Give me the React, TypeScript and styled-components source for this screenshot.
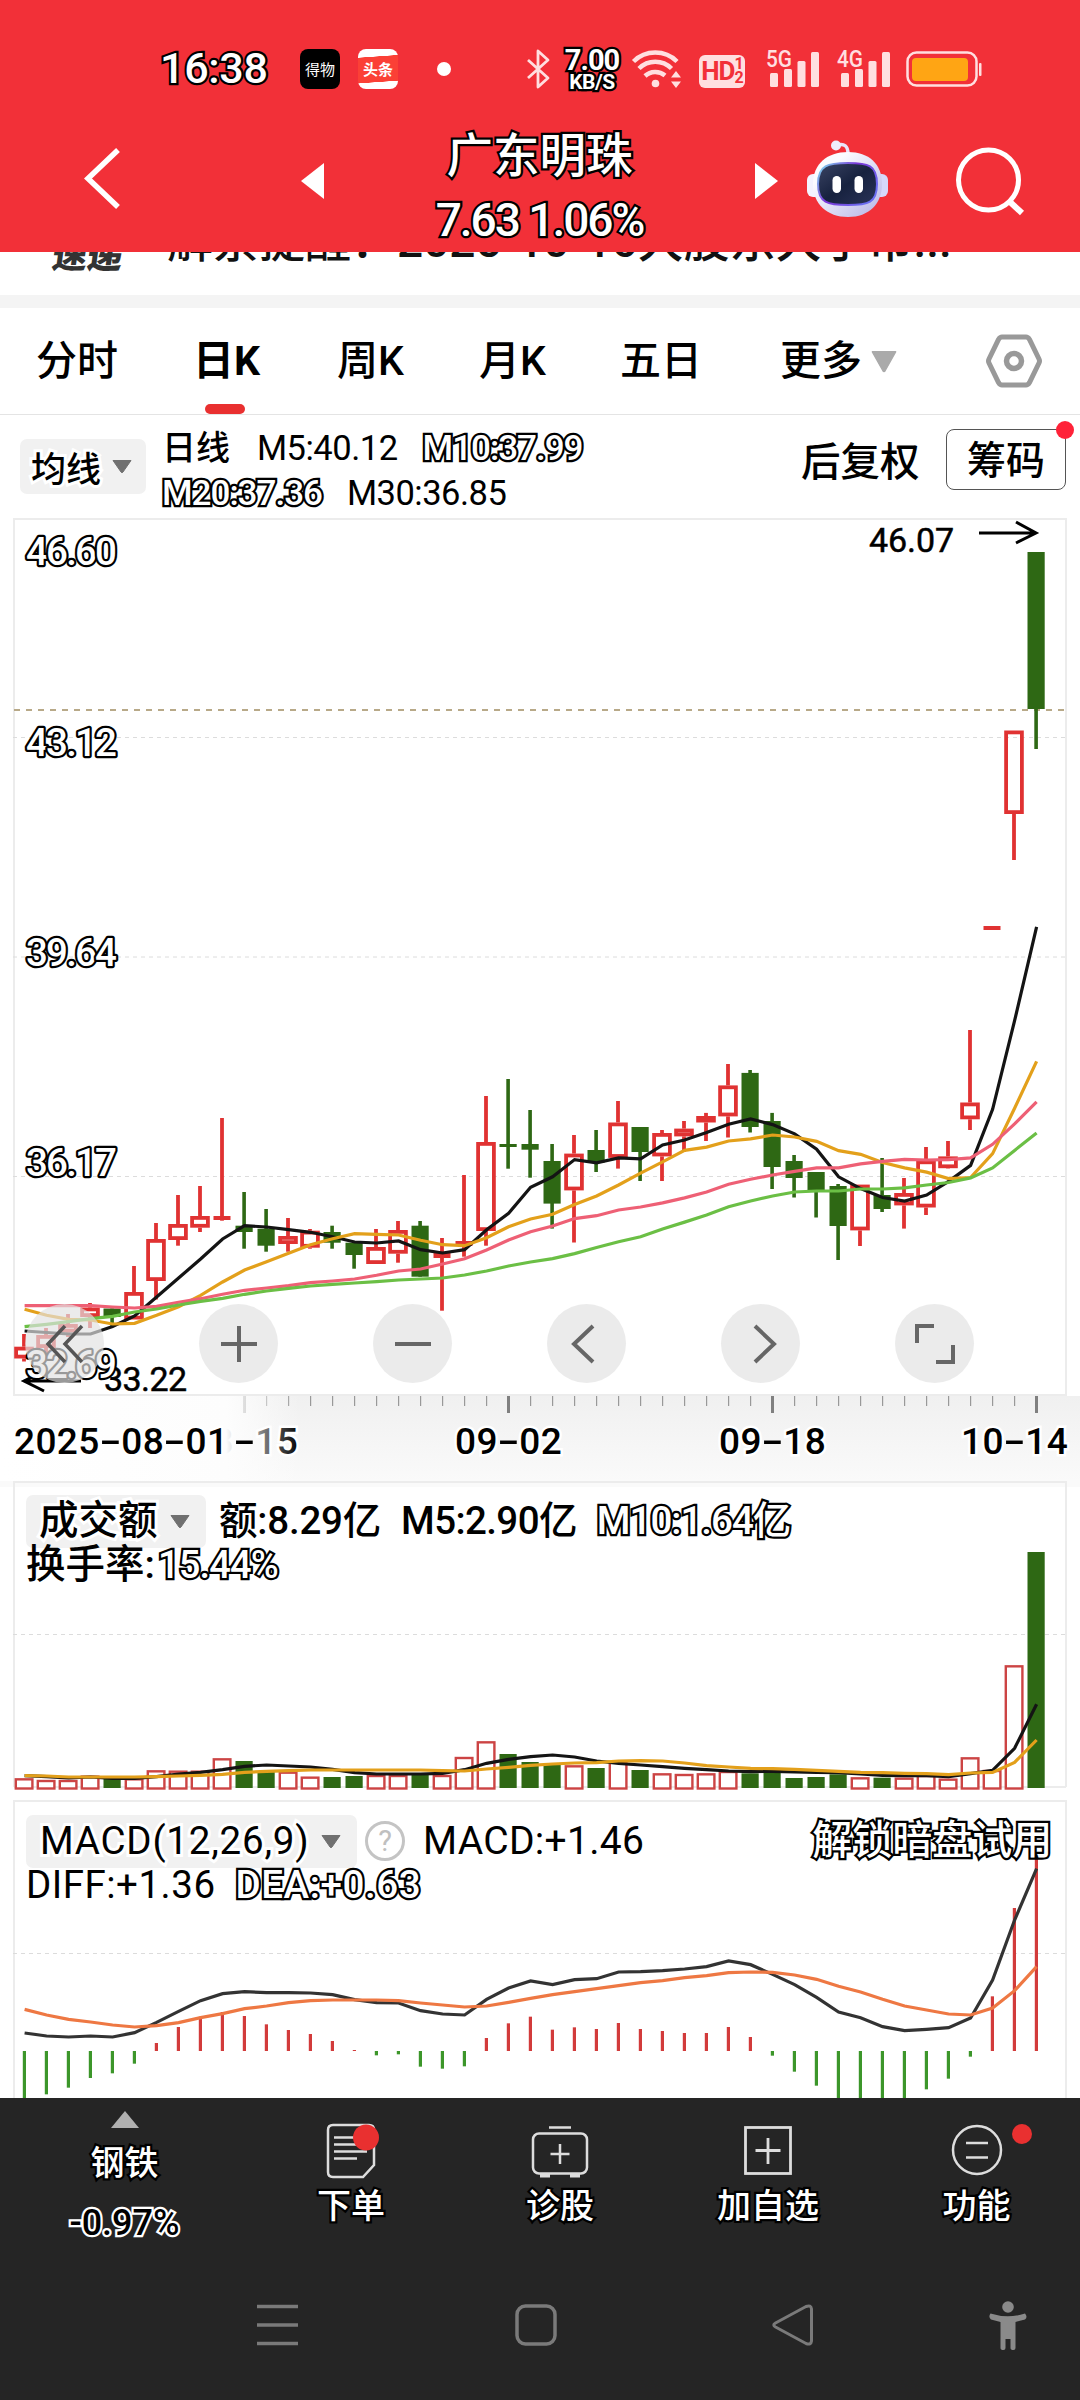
import React from 'react';
import styled, { createGlobalStyle, css } from 'styled-components';

const GlobalStyle = createGlobalStyle`
  html, body { margin: 0; padding: 0; background: #fff; }
  * { box-sizing: border-box; }
  svg { display: block; flex: none; overflow: visible; }
`;

const FONT = `Roboto, "Noto Sans CJK SC", sans-serif`;

/* ---------- shared text ---------- */

type TxtProps = { $size: number; $ls?: number; $w?: number; $tone?: 'plain' | 'outline' | 'halo' | 'inverse'; $ml?: number };

const Txt = styled.span<TxtProps>`
  font-family: ${FONT};
  font-size: ${p => p.$size}px;
  font-weight: ${p => p.$w ?? 500};
  letter-spacing: ${p => p.$ls ?? 0}px;
  margin-left: ${p => p.$ml ?? 0}px;
  white-space: pre;
  color: #000;
  paint-order: stroke fill;
  stroke-linejoin: round;
  ${p => p.$tone === 'outline' && css`color: #fff; -webkit-text-stroke: 4.5px #000;`}
  ${p => p.$tone === 'halo' && css`-webkit-text-stroke: 6px #fff;`}
  ${p => p.$tone === 'inverse' && css`color: #000; -webkit-text-stroke: 4.5px #fff;`}
`;

/* ---------- page ---------- */

const Page = styled.div`
  width: 1080px;
  height: 2400px;
  display: flex;
  flex-direction: column;
  overflow: hidden;
  background: #fff;
  font-family: ${FONT};
`;

const Top = styled.header`
  height: 252px;
  flex: none;
  background: #f23038;
  display: flex;
  flex-direction: column;
`;

const StatusBar = styled.div`
  height: 120px;
  padding: 18px 0 0 162px;
  display: flex;
  align-items: center;
`;

const Clock = styled.div`
  width: 138px;
  line-height: 50px;
  padding-top: 8px;
  margin-left: -2px;
  margin-right: 2px;
`;

const AppIcon = styled.div<{ $bg: string; $font: number }>`
  width: 40px;
  height: 40px;
  border-radius: 8px;
  margin-right: 18px;
  background: ${p => p.$bg};
  color: #fff;
  display: flex;
  align-items: center;
  justify-content: center;
  font: ${p => p.$font} 15px/40px "Noto Sans CJK SC", sans-serif;
`;

const Dot = styled.div`
  width: 14px;
  height: 14px;
  margin: 0 75px 0 21px;
  border-radius: 50%;
  background: #fff;
`;

const Speed = styled.div`
  width: 68px;
  display: flex;
  flex-direction: column;
  align-items: center;
  line-height: 22px;
  padding-top: 3px;
`;

const HdBadge = styled.div`
  width: 46px;
  height: 33px;
  margin-top: 4px;
  border-radius: 6px;
  background: #ffdfe0;
  color: #f23038;
  display: flex;
  align-items: center;
  justify-content: center;
  font: 700 26px/33px ${FONT};
  letter-spacing: -1px;
`;

const HdNums = styled.span`
  display: flex;
  flex-direction: column;
  font-size: 16px;
  line-height: 14px;
`;

const TitleBar = styled.div`
  height: 132px;
  display: flex;
  align-items: flex-start;
`;

const Slot = styled.div<{ $mt: number }>`
  padding-top: ${p => p.$mt}px;
`;

const TitleBlock = styled.div`
  width: 431px;
  height: 132px;
  display: flex;
  flex-direction: column;
  align-items: center;
  line-height: 64px;
  padding-top: 4px;
`;

const News = styled.div`
  height: 43px;
  flex: none;
  overflow: hidden;
  display: flex;
  align-items: flex-start;
  padding-left: 53px;
`;

const NewsLogo = styled.span`
  width: 114px;
  font: 900 35px/50px "Noto Sans CJK SC", sans-serif;
  transform: skewX(-8deg);
  color: #333;
  margin-top: -24px;
`;

const NewsTitle = styled.span`
  font: 500 46px/60px ${FONT};
  white-space: nowrap;
  margin-top: -41px;
  color: #111;
`;

const Divider = styled.div`
  height: 13px;
  flex: none;
  background: #f4f4f4;
`;

/* ---------- tabs ---------- */

const Tabs = styled.nav`
  height: 107px;
  flex: none;
  display: flex;
  align-items: center;
  padding-left: 36px;
  border-bottom: 1px solid #e4e4e4;
`;

const Tab = styled.div<{ $gap: number; $active?: boolean }>`
  position: relative;
  height: 106px;
  display: flex;
  align-items: center;
  margin-right: ${p => p.$gap}px;
  font: ${p => (p.$active ? 700 : 500)} 41px/110px ${FONT};
  color: #000;
`;

const TabMark = styled.i`
  position: absolute;
  left: 12px;
  bottom: 0;
  width: 40px;
  height: 10px;
  border-radius: 5px;
  background: #e93030;
`;

/* ---------- indicator row ---------- */

const IndicatorRow = styled.div`
  height: 103px;
  flex: none;
  display: flex;
  align-items: flex-start;
  padding-left: 20px;
`;

const Chip = styled.div<{ $w: number; $h: number; $pl: number; $pr: number }>`
  width: ${p => p.$w}px;
  height: ${p => p.$h}px;
  flex: none;
  padding: 0 ${p => p.$pr}px 0 ${p => p.$pl}px;
  border-radius: 7px;
  background: #f1f1f1;
  display: flex;
  align-items: center;
  justify-content: space-between;
`;

const ChipWrap = styled.div`
  padding-top: 24px;
`;

const Legend = styled.div`
  width: 656px;
  flex: none;
  padding: 11px 0 0 16px;
  line-height: 45px;
`;

const LegendLine = styled.div`
  display: flex;
`;

const Adjust = styled.div`
  width: 145px;
  flex: none;
  padding-top: 18px;
  line-height: 60px;
  margin-left: -1px;
`;

const ChipButton = styled.div`
  position: relative;
  flex: none;
  width: 120px;
  height: 61px;
  margin-top: 14px;
  border: 1.5px solid #555;
  border-radius: 8px;
  line-height: 62px;
  text-align: center;
`;

const Badge = styled.i<{ $size: number; $top: number; $right: number; $c: string }>`
  position: absolute;
  width: ${p => p.$size}px;
  height: ${p => p.$size}px;
  top: ${p => p.$top}px;
  right: ${p => p.$right}px;
  border-radius: 50%;
  background: ${p => p.$c};
`;

/* ---------- panels ---------- */

const Stack = styled.section<{ $h: number; $bg?: string }>`
  height: ${p => p.$h}px;
  flex: none;
  display: grid;
  background: ${p => p.$bg ?? '#fff'};
  overflow: hidden;
  & > * { grid-area: 1 / 1; }
`;

const ToolRow = styled.div`
  align-self: end;
  display: flex;
  gap: 95px;
  padding: 0 0 13px 25px;
`;

const ToolButton = styled.div`
  width: 79px;
  height: 79px;
  border-radius: 50%;
  background: rgba(226, 226, 226, 0.68);
  display: flex;
  align-items: center;
  justify-content: center;
`;

const DateRow = styled.div`
  display: flex;
  padding: 24px 0 0 191px;
  line-height: 44px;
  gap: 158px;
`;

const DateFade = styled.div`
  width: 340px;
  padding: 24px 0 0 14px;
  line-height: 44px;
  background: linear-gradient(90deg, #fff 0, #fdfdfd 226px, rgba(253, 253, 253, 0) 300px);
`;

const DateText = styled.span<{ $pull?: boolean }>`
  width: 106px;
  flex: none;
  margin-left: ${p => (p.$pull ? -22 : 0)}px;
  font: 500 37px/44px ${FONT};
  letter-spacing: 0.4px;
  white-space: nowrap;
  color: #000;
  -webkit-text-stroke: 5px #fff;
  paint-order: stroke fill;
`;

const Dash = styled.span`
  display: inline-block;
  width: 21.5px;
  text-align: center;
  transform: scaleX(1.75);
  -webkit-text-stroke: 0;
`;

const PanelHead = styled.div<{ $pt: number }>`
  display: flex;
  flex-direction: column;
  padding: ${p => p.$pt}px 0 0 26px;
  line-height: 44px;
`;

const HeadLine = styled.div`
  display: flex;
  align-items: center;
  height: 44px;
`;

const Help = styled.span`
  width: 40px;
  height: 40px;
  margin-left: 8px;
  border: 3px solid #c4c4c4;
  border-radius: 50%;
  color: #c0c0c0;
  text-align: center;
  font: 400 29px/35px ${FONT};
`;

/* ---------- bottom ---------- */

const Bottom = styled.footer`
  flex: 1;
  background: #252525;
`;

const NavRow = styled.div`
  display: flex;
  height: 152px;
  padding-left: 24px;
`;

const Sector = styled.div`
  width: 201px;
  padding-top: 13px;
  display: flex;
  flex-direction: column;
  align-items: center;
  line-height: 59px;
  gap: 1px;
  & > svg { margin-bottom: 5px; }
`;

const NavItem = styled.div<{ $w: number }>`
  position: relative;
  width: ${p => p.$w}px;
  padding-top: 20px;
  display: flex;
  flex-direction: column;
  align-items: center;
  line-height: 52px;
`;

const SystemRow = styled.div`
  display: flex;
  align-items: center;
  height: 150px;
  padding: 2px 0 3px 255px;
`;

/* ---------- data ---------- */

const xAt = (i: number) => 24 + 22 * i;

// direction, high, body top, body bottom, low
type Candle = [0 | 1, number, number, number, number];
const candles: Candle[] = [
  [1, 1334, 1346.7, 1358.5, 1361.5], [1, 1328, 1335, 1348, 1361], [1, 1314, 1324, 1332.5, 1337],
  [1, 1303, 1307.5, 1317, 1328], [0, 1308.5, 1308.5, 1317, 1326], [1, 1266, 1292, 1319.5, 1319.5],
  [1, 1223, 1239, 1281, 1299.5], [1, 1195, 1224, 1240, 1245.7], [1, 1186, 1216, 1227.7, 1232],
  [1, 1118, 1216, 1220, 1220.7], [0, 1192, 1225.7, 1232, 1248.7], [0, 1209, 1228.7, 1245.7, 1251.7],
  [1, 1218, 1236, 1244, 1251.7], [1, 1229, 1230.7, 1247.7, 1248.7], [0, 1225.7, 1232, 1242.7, 1248.7],
  [0, 1242.7, 1242.7, 1255, 1268.7], [1, 1229, 1247, 1264, 1264], [1, 1221, 1230, 1253.7, 1262.7],
  [0, 1221, 1225.7, 1276.7, 1276.7], [1, 1238, 1253, 1258, 1310.7], [1, 1175, 1241, 1246, 1256.7],
  [1, 1096, 1142, 1231, 1245.7], [0, 1079, 1144, 1147, 1168.7], [0, 1110, 1144, 1149.7, 1177.7],
  [0, 1144, 1161, 1203.6, 1228.6], [1, 1135, 1153.6, 1190.4, 1242.5], [0, 1130, 1150, 1162.5, 1172],
  [1, 1101, 1122.5, 1157.9, 1168.6], [0, 1127, 1127, 1152, 1181], [1, 1130, 1133, 1156.4, 1181],
  [1, 1121, 1128.6, 1136.4, 1151.8], [1, 1112.9, 1116, 1122.5, 1141], [1, 1064, 1085.4, 1116.4, 1137.5],
  [0, 1070, 1072.9, 1127, 1132.5], [0, 1112.9, 1121, 1167, 1189], [0, 1155, 1161, 1178, 1197.5],
  [0, 1172, 1172, 1191, 1217.5], [0, 1184, 1186, 1226, 1260], [1, 1184.6, 1184.6, 1230.4, 1246],
  [0, 1158, 1195, 1209, 1212], [1, 1178, 1193, 1205.4, 1228.6], [1, 1147, 1160.4, 1207.5, 1215],
  [1, 1141, 1156.4, 1168.2, 1168.6], [1, 1030, 1102.5, 1119.3, 1130], [1, 926, 926, 930, 930],
  [1, 730.5, 730.5, 814, 860], [0, 552, 552, 709, 749],
];

const ma5 = [1331, 1332.5, 1334, 1334, 1326.5, 1316, 1297, 1278, 1259, 1239, 1225.7, 1227, 1229.7, 1232.3, 1236.7, 1242, 1243, 1241, 1249.7, 1253, 1249.7, 1229.7, 1213.3, 1187.3, 1176.8, 1159.6, 1162.9, 1157.9, 1158.9, 1145, 1140, 1132.5, 1124.3, 1118.9, 1124.6, 1133.9, 1149.3, 1176.8, 1188.6, 1197.5, 1201, 1195, 1181.4, 1165.4, 1109.3, 1020.7, 926.8];
const ma10 = [1309.3, 1315.3, 1319.3, 1320, 1324, 1323.3, 1315.3, 1306.7, 1295.3, 1282, 1270, 1261.7, 1253.3, 1244.7, 1238.7, 1233.7, 1234.3, 1235, 1240.3, 1244.7, 1245.7, 1237.7, 1226.7, 1219, 1214.3, 1204.6, 1196, 1185, 1173.2, 1161.8, 1150.4, 1147.1, 1141, 1138.9, 1135, 1137, 1141.4, 1150.7, 1154.3, 1162.5, 1167.9, 1172.1, 1178.6, 1177.5, 1153.6, 1108.2, 1061.4];
const ma20 = [1305.7, 1305.7, 1305.7, 1305.7, 1307, 1308, 1306.3, 1302.3, 1298.7, 1294.3, 1290.3, 1288, 1285.7, 1282.7, 1281, 1279, 1275.3, 1271, 1269, 1264, 1258.7, 1250, 1240, 1231.7, 1226, 1218.6, 1215.7, 1210, 1207, 1202.9, 1197.9, 1192, 1184.3, 1179.3, 1175, 1171.4, 1167.9, 1167.9, 1163.9, 1161.4, 1159.3, 1160, 1159.6, 1157.9, 1144.3, 1123.9, 1101.8];
const ma30 = [1326.7, 1324.3, 1321.7, 1318.7, 1316.3, 1312, 1309, 1305, 1301.3, 1298.3, 1294.3, 1291, 1288.3, 1286, 1284.3, 1283, 1281.7, 1280, 1279, 1278, 1275, 1271, 1266, 1262, 1258.6, 1253.6, 1247.5, 1241.8, 1236.8, 1228.9, 1222.1, 1215, 1206.8, 1201, 1196, 1192, 1191, 1191, 1189, 1189, 1187.9, 1185, 1182.5, 1177.9, 1167.9, 1150.4, 1132.9];

// lower panels keep their samples in thirds of a pixel
const third = (base: number) => (v: number) => base + v / 3;
const volY = third(1470);
const macdY = third(1790);

const volume = [925, 930, 930, 917, 922, 925, 901, 902, 902, 865, 873, 905, 905, 920, 921, 918, 915, 915, 915, 915, 861, 814, 852, 876, 885, 886, 894, 875, 900, 910, 912, 910, 903, 910, 908, 924, 921, 913, 922, 923, 923, 915, 926, 862, 900, 586, 246];
const vol5 = [917, 920, 924, 921, 925, 925, 920, 912, 907, 899, 889, 885, 888, 891, 898, 908, 912, 912, 912, 910, 899, 880, 868, 860, 855, 861, 873, 880, 885, 890, 895, 899, 903, 905, 904, 906, 907, 908, 912, 916, 917, 917, 920, 911, 901, 835, 703];
const vol10 = [917, 918, 921, 921, 921, 921, 920, 918, 916, 913, 907, 904, 902, 900, 900, 900, 900, 900, 900, 902, 903, 897, 892, 886, 882, 879, 878, 873, 872, 873, 879, 887, 891, 895, 896, 898, 901, 904, 907, 908, 910, 911, 914, 909, 907, 877, 810];
const hist = [940, 913, 893, 864, 850, 821, 759, 711, 680, 666, 678, 703, 720, 732, 753, 780, 796, 793, 830, 836, 829, 744, 700, 680, 719, 712, 717, 699, 717, 723, 729, 729, 711, 741, 797, 845, 887, 940, 940, 940, 940, 898, 866, 800, 619, 354, 200];
const diff = [729, 738, 741, 738, 741, 728, 697, 664, 632, 611, 605, 608, 608, 609, 614, 629, 638, 639, 662, 672, 675, 628, 594, 573, 584, 569, 566, 546, 545, 542, 537, 530, 513, 524, 553, 584, 622, 666, 683, 710, 722, 718, 713, 684, 570, 390, 236];
const dea = [658, 675, 688, 696, 705, 711, 707, 698, 683, 671, 656, 648, 638, 632, 630, 630, 630, 632, 639, 645, 651, 648, 637, 625, 614, 605, 596, 587, 578, 572, 563, 557, 548, 546, 547, 555, 568, 589, 606, 628, 648, 660, 672, 675, 654, 602, 530];

const RED = '#e03232';
const GREEN = '#2e6814';

const Line = ({ data, color, y = (v: number) => v }: { data: number[]; color: string; y?: (v: number) => number }) => (
  <polyline points={data.map((v, i) => `${xAt(i) + 0.6},${y(v)}`).join(' ')} fill="none" stroke={color} strokeWidth="3.2" />
);

const Grid = ({ y }: { y: number }) => <line x1="13" x2="1067" y1={y} y2={y} stroke="#dcdcdc" strokeWidth="1" strokeDasharray="4 4" />;

const CandleMark = ({ c, i }: { c: Candle; i: number }) => {
  const [up, hi, top, bot, lo] = c;
  const x = xAt(i);
  if (!up)
    return (
      <g fill={GREEN}>
        <rect x={x - 1.7} y={hi} width="3.6" height={lo - hi} />
        <rect x={x - 8.5} y={top} width="17.2" height={bot - top} />
      </g>
    );
  const thin = bot - top < 5.5;
  return (
    <g fill={RED}>
      <rect x={x - 1.9} y={hi} width="3.8" height={top - hi} />
      <rect x={x - 1.9} y={bot} width="3.8" height={lo - bot} />
      {thin ? (
        <rect x={x - 8.5} y={top} width="17" height={bot - top} />
      ) : (
        <rect x={x - 7.9} y={top + 1.9} width="15.8" height={bot - top - 3.8} fill="none" stroke={RED} strokeWidth="3.8" />
      )}
    </g>
  );
};

const PriceLabel = ({ y, children }: { y: number; children: string }) => (
  <text x="26" y={y} fontFamily={FONT} fontSize="38.5" fontWeight="500" textLength="91" fill="#fff" stroke="#000" strokeWidth="4.5" strokeLinejoin="round" paintOrder="stroke">
    {children}
  </text>
);

const PriceChart = () => (
  <svg width="1080" height="878" viewBox="0 518 1080 878">
    <rect x="14" y="519" width="1052" height="876" fill="none" stroke="#ececec" strokeWidth="2" />
    <Grid y={737.5} />
    <Grid y={957} />
    <Grid y={1176.5} />
    <line x1="14" x2="1066" y1="710" y2="710" stroke="#b8a988" strokeWidth="2" strokeDasharray="6 6" />
    {candles.map((c, i) => <CandleMark key={i} c={c} i={i} />)}
    <Line data={ma5} color="#141414" />
    <Line data={ma10} color="#e3a01b" />
    <Line data={ma20} color="#ee6075" />
    <Line data={ma30} color="#6bbf45" />
    <path d="M979 533h57M1016 522l20 11l-20 10" fill="none" stroke="#000" strokeWidth="3" />
    <text x="869" y="552" fontFamily={FONT} fontSize="34" textLength="85" fill="#000" stroke="#000" strokeWidth="0.5">46.07</text>
    <path d="M81 1381h-57M44 1371l-20 10l20 10" fill="none" stroke="#000" strokeWidth="3" />
    <text x="104" y="1391" fontFamily={FONT} fontSize="34" textLength="83" fill="#000" stroke="#000" strokeWidth="0.5">33.22</text>
    <PriceLabel y={565}>46.60</PriceLabel>
    <PriceLabel y={756}>43.12</PriceLabel>
    <PriceLabel y={966}>39.64</PriceLabel>
    <PriceLabel y={1176}>36.17</PriceLabel>
    <PriceLabel y={1378}>32.69</PriceLabel>
  </svg>
);

const TimeTicks = () => (
  <svg width="1080" height="85" viewBox="0 1396 1080 85">
    {Array.from({ length: 37 }, (_, k) => k + 10).map(i => {
      const major = (i - 10) % 12 === 0;
      return <rect key={i} x={xAt(i) - (major ? 1 : 0)} y="1396" width={major ? 3 : 1.2} height={major ? 17 : 10} fill={major ? '#808080' : '#999'} />;
    })}
  </svg>
);

const VolumeChart = () => (
  <svg width="1080" height="319" viewBox="0 1481 1080 319">
    <path d="M14 1787V1482H1066V1787" fill="none" stroke="#ececec" strokeWidth="2" />
    <line x1="14" x2="1066" y1="1787" y2="1787" stroke="#ececec" strokeWidth="2" />
    <Grid y={1634.5} />
    {volume.map((v, i) => {
      const y = volY(v);
      return candles[i][0] ? (
        <rect key={i} x={xAt(i) - 8.2} y={y + 1} width="16.6" height={1787.5 - y} fill="#fff" stroke="#cc4444" strokeWidth="2.4" />
      ) : (
        <rect key={i} x={xAt(i) - 8.5} y={y} width="17.2" height={1788 - y} fill={GREEN} />
      );
    })}
    <Line data={vol5} color="#141414" y={volY} />
    <Line data={vol10} color="#e3a01b" y={volY} />
  </svg>
);

const MacdChart = () => (
  <svg width="1080" height="298" viewBox="0 1800 1080 298">
    <path d="M14 2100V1801H1066V2100" fill="none" stroke="#ececec" strokeWidth="2" />
    <Grid y={1953.5} />
    {hist.map((v, i) => {
      const y = macdY(v);
      const up = v < 783;
      return <rect key={i} x={xAt(i) - 1.2} y={up ? y : 2051} width="3.2" height={Math.abs(2051 - y)} fill={up ? '#d23b3b' : '#3c962a'} />;
    })}
    <Line data={diff} color="#333" y={macdY} />
    <Line data={dea} color="#ee7843" y={macdY} />
  </svg>
);

/* ---------- icons ---------- */

const Bars = ({ label }: { label: string }) => (
  <svg width="54" height="40" viewBox="0 0 54 40" fill="#ffdfe0">
    <text x="0" y="18" fontFamily={FONT} fontSize="23" fontWeight="500" textLength="26" lengthAdjust="spacingAndGlyphs">{label}</text>
    <rect x="4" y="24" width="8" height="14" rx="1.5" />
    <rect x="18" y="20" width="8" height="18" rx="1.5" />
    <rect x="31.5" y="12" width="8" height="26" rx="1.5" />
    <rect x="45" y="3" width="8" height="35" rx="1.5" />
  </svg>
);

const Spacer = styled.span<{ $w: number }>`
  width: ${p => p.$w}px;
  flex: none;
`;

const DownTri = ({ w = 20, h = 13, c = '#707070' }: { w?: number; h?: number; c?: string }) => (
  <svg width={w} height={h} viewBox="0 0 20 13" preserveAspectRatio="none">
    <path d="M1 .5h18L11 12q-1 1.300-2 0z" fill={c} stroke={c} strokeLinejoin="round" />
  </svg>
);

const Robot = () => (
  <svg width="84" height="80" viewBox="0 0 84 80">
    <defs>
      <linearGradient id="head" x1="0" y1="0" x2="1" y2="1">
        <stop offset="0.25" stopColor="#fbfbff" />
        <stop offset="1" stopColor="#b4b2e6" />
      </linearGradient>
      <linearGradient id="rim" x1="0" y1="0" x2="1" y2="0.6">
        <stop offset="0" stopColor="#7fe3ee" />
        <stop offset="0.5" stopColor="#7a35d8" />
        <stop offset="1" stopColor="#6a6cf0" />
      </linearGradient>
      <linearGradient id="visor" x1="0" y1="0" x2="1" y2="1">
        <stop offset="0" stopColor="#3b4464" />
        <stop offset="0.5" stopColor="#17223f" />
        <stop offset="1" stopColor="#2a3358" />
      </linearGradient>
    </defs>
    <path d="M31 7q11-3 11 9" fill="none" stroke="#e8e4fa" strokeWidth="3.500" />
    <circle cx="30" cy="7.500" r="5" fill="#efedfc" />
    <rect x="1" y="36" width="14" height="23" rx="6" fill="#f3f3ff" />
    <rect x="68" y="36" width="14" height="23" rx="6" fill="#d6d8fa" />
    <path d="M42 14C63 14 76 26 76 46S63 79 42 79S7 66 7 46S21 14 42 14z" fill="url(#head)" />
    <path d="M42 25C62 25 71 27 71 46S62 67 42 67S12 65 12 46S22 25 42 25z" fill="url(#visor)" stroke="url(#rim)" strokeWidth="2" />
    <rect x="26.500" y="38" width="8.500" height="17" rx="4.200" fill="#fff" />
    <rect x="48.500" y="38" width="8.500" height="17" rx="4.200" fill="#fff" />
  </svg>
);

const D = () => <Dash>-</Dash>;

export default function App() {
  return (
    <>
      <GlobalStyle />
      <Page>
        <Top>
          <StatusBar>
            <Clock><Txt $size={43} $tone="outline" $ls={-0.3}>16:38</Txt></Clock>
            <AppIcon $bg="#000" $font={400}>得物</AppIcon>
            <AppIcon $bg="linear-gradient(176deg, #fff 20%, #fb4036 21%, #fb4036 80%, #fff 81%)" $font={700}>头条</AppIcon>
            <Dot />
            <svg width="24" height="40" viewBox="0 0 24 40" fill="none" stroke="#ffdfe0" strokeWidth="2.800" strokeLinejoin="round">
              <path d="M2 11l20 18l-10 9V2l10 9L2 29" />
            </svg>
            <Spacer $w={8} />
            <Speed>
              <Txt $size={29} $w={700} $tone="outline" $ls={-1}>7.00</Txt>
              <Txt $size={21} $w={700} $tone="outline" $ls={-0.5}>KB/S</Txt>
            </Speed>
            <Spacer $w={6} />
            <svg width="50" height="40" viewBox="0 0 50 40" fill="none" stroke="#ffdfe0" strokeWidth="4.500">
              <path d="M1.500 12.500A31 31 0 0 1 45 12.500" />
              <path d="M7 19.500A23 23 0 0 1 39.500 19.500" />
              <path d="M13 27A15 15 0 0 1 33 26.500" />
              <circle cx="23.500" cy="34.500" r="3.800" fill="#ffdfe0" stroke="none" />
              <path d="M44 22l5 6.500h-10zM44 39l5-6.500h-10z" fill="#ffdfe0" stroke="none" />
            </svg>
            <Spacer $w={17} />
            <HdBadge>HD<HdNums><span>1</span><span>2</span></HdNums></HdBadge>
            <Spacer $w={21} />
            <Bars label="5G" />
            <Spacer $w={17} />
            <Bars label="4G" />
            <Spacer $w={15} />
            <svg width="76" height="36" viewBox="0 0 76 36">
              <rect x="1.500" y="1.500" width="69" height="33" rx="9" fill="none" stroke="#ffdfe0" strokeWidth="2.500" />
              <rect x="6" y="7" width="56" height="23" rx="4" fill="#ffa514" />
              <rect x="73" y="12" width="2.500" height="13" rx="1" fill="#ffdfe0" />
            </svg>
          </StatusBar>
          <TitleBar>
            <Spacer $w={82} />
            <Slot $mt={25}><svg width="42" height="66" viewBox="0 0 42 66"><path d="M36 5L6 33.500L36 62" fill="none" stroke="#fff" strokeWidth="5.500" /></svg></Slot>
            <Spacer $w={176} />
            <Slot $mt={39}><svg width="24" height="44" viewBox="0 0 24 44"><path d="M1 22L24 4v36z" fill="#fff" /></svg></Slot>
            <TitleBlock>
              <Txt $size={46.5} $tone="outline">广东明珠</Txt>
              <Txt $size={46} $tone="outline" $ls={-2}>7.63 1.06%</Txt>
            </TitleBlock>
            <Slot $mt={39}><svg width="24" height="44" viewBox="0 0 24 44"><path d="M23 22L0 4v36z" fill="#fff" /></svg></Slot>
            <Spacer $w={27} />
            <Slot $mt={18}><Robot /></Slot>
            <Spacer $w={64} />
            <Slot $mt={27}><svg width="72" height="74" viewBox="0 0 72 74" fill="none" stroke="#fff" strokeWidth="5"><circle cx="34.500" cy="33" r="30" /><path d="M55 54l13 12" strokeWidth="6" /></svg></Slot>
          </TitleBar>
        </Top>
        <News>
          <NewsLogo>速递</NewsLogo>
          <NewsTitle>解禁提醒：2025-10-16大股东大于市...</NewsTitle>
        </News>
        <Divider />
        <Tabs>
          <Tab $gap={75}>分时</Tab>
          <Tab $gap={77} $active>日K<TabMark /></Tab>
          <Tab $gap={75}>周K</Tab>
          <Tab $gap={74}>月K</Tab>
          <Tab $gap={78}>五日</Tab>
          <Tab $gap={9}>更多</Tab>
          <DownTri w={26} h={21} c="#aaa" />
          <Spacer $w={89} />
          <svg width="56" height="56" viewBox="0 0 56 56" fill="none" stroke="#999">
            <path d="M16 4H40Q42 4 43.500 6.500L53 26Q54 28 53 30L43.500 49.500Q42 52 40 52H16Q14 52 12.500 49.500L3 30Q2 28 3 26L12.500 6.500Q14 4 16 4z" strokeWidth="5" />
            <circle cx="28" cy="28" r="7.500" strokeWidth="5.500" />
          </svg>
        </Tabs>
        <IndicatorRow>
          <ChipWrap>
            <Chip $w={126} $h={55} $pl={11} $pr={14}><Txt $size={35} $tone="halo">均线</Txt><DownTri /></Chip>
          </ChipWrap>
          <Legend>
            <LegendLine>
              <Txt $size={34}>日线</Txt>
              <Txt $size={34.5} $ml={27} $w={400} $ls={-0.5}>M5:40.12</Txt>
              <Txt $size={35} $ml={25} $tone="outline" $ls={-1}>M10:37.99</Txt>
            </LegendLine>
            <LegendLine>
              <Txt $size={35} $tone="outline" $ls={-1}>M20:37.36</Txt>
              <Txt $size={34.5} $ml={25} $w={400} $ls={-0.5}>M30:36.85</Txt>
            </LegendLine>
          </Legend>
          <Adjust><Txt $size={39.5}>后复权</Txt></Adjust>
          <ChipButton><Txt $size={39}>筹码</Txt><Badge $size={18} $top={-9} $right={-9} $c="#ff2238" /></ChipButton>
        </IndicatorRow>
        <Stack $h={878}>
          <PriceChart />
          <ToolRow>
            <ToolButton>
              <svg width="40" height="42" viewBox="0 0 40 42" fill="none" stroke="#555" strokeWidth="3.500"><path d="M20 3L3 21L20 39M37 3L20 21L37 39" /></svg>
            </ToolButton>
            <ToolButton>
              <svg width="38" height="38" viewBox="0 0 38 38" stroke="#666" strokeWidth="4"><path d="M19 1v36M1 19h36" /></svg>
            </ToolButton>
            <ToolButton>
              <svg width="38" height="38" viewBox="0 0 38 38" stroke="#666" strokeWidth="4"><path d="M1 19h36" /></svg>
            </ToolButton>
            <ToolButton>
              <svg width="34" height="42" viewBox="0 0 34 42" fill="none" stroke="#666" strokeWidth="4"><path d="M23 3L4 21L23 39" /></svg>
            </ToolButton>
            <ToolButton>
              <svg width="34" height="42" viewBox="0 0 34 42" fill="none" stroke="#666" strokeWidth="4"><path d="M11 3L30 21L11 39" /></svg>
            </ToolButton>
            <ToolButton>
              <svg width="42" height="42" viewBox="0 0 42 42" fill="none" stroke="#666" strokeWidth="4"><path d="M3 20V3H20M39 22V39H22" /></svg>
            </ToolButton>
          </ToolRow>
        </Stack>
        <Stack $h={85} $bg="linear-gradient(#f0f0f0, #fafafa)">
          <TimeTicks />
          <DateRow>
            <DateText>08<D />15</DateText>
            <DateText>09<D />02</DateText>
            <DateText>09<D />18</DateText>
            <DateText $pull>10<D />14</DateText>
          </DateRow>
          <DateFade><DateText>2025<D />08<D />01</DateText></DateFade>
        </Stack>
        <Stack $h={319} $bg="linear-gradient(#fafafa 6px, #fff 6px)">
          <VolumeChart />
          <PanelHead $pt={18}>
            <HeadLine>
              <Chip $w={180} $h={53} $pl={13} $pr={16}><Txt $size={39.5} $tone="halo">成交额</Txt><DownTri /></Chip>
              <Txt $size={38.5} $ml={13} $ls={-0.2}>额:8.29亿</Txt>
              <Txt $size={38.5} $ml={20} $ls={-0.6}>M5:2.90亿</Txt>
              <Txt $size={38.5} $ml={20} $tone="outline" $ls={-1}>M10:1.64亿</Txt>
            </HeadLine>
            <HeadLine>
              <Txt $size={39.5}>换手率:</Txt>
              <Txt $size={38} $ml={3} $tone="outline" $ls={-0.8}>15.44%</Txt>
            </HeadLine>
          </PanelHead>
        </Stack>
        <Stack $h={298}>
          <MacdChart />
          <PanelHead $pt={19}>
            <HeadLine>
              <Chip $w={331} $h={53} $pl={14} $pr={16}><Txt $size={38.5} $tone="halo" $w={400} $ls={0.8}>MACD(12,26,9)</Txt><DownTri /></Chip>
              <Help>?</Help>
              <Txt $size={39} $ml={18} $w={400} $ls={0.3}>MACD:+1.46</Txt>
              <Txt $size={40} $ml={168} $tone="outline">解锁暗盘试用</Txt>
            </HeadLine>
            <HeadLine>
              <Txt $size={38.5} $w={400} $ls={0.5}>DIFF:+1.36</Txt>
              <Txt $size={38.5} $ml={20} $tone="outline" $ls={0.6}>DEA:+0.63</Txt>
            </HeadLine>
          </PanelHead>
        </Stack>
        <Bottom>
          <NavRow>
            <Sector>
              <svg width="28" height="17" viewBox="0 0 28 17"><path d="M14 0l14 17H0z" fill="#b0b0b0" /></svg>
              <Txt $size={34} $tone="outline">钢铁</Txt>
              <Txt $size={36} $tone="inverse">-0.97%</Txt>
            </Sector>
            <NavItem $w={252}>
              <svg width="60" height="62" viewBox="0 0 60 62" fill="none" stroke="#ddd" strokeWidth="2.500">
                <path d="M12 7H48Q53 7 53 12V47L42 59H12Q7 59 7 54V12Q7 7 12 7z" />
                <path d="M13 19.500h32M13 26.500h32M13 33.500h33M13 40.500h23" />
                <circle cx="45" cy="19.500" r="13" fill="#e93030" stroke="none" />
              </svg>
              <Txt $size={34} $tone="outline">下单</Txt>
            </NavItem>
            <NavItem $w={166}>
              <svg width="60" height="62" viewBox="0 0 60 62" fill="none" stroke="#ddd" strokeWidth="2.500">
                <rect x="3" y="15.500" width="54" height="40" rx="6" />
                <path d="M19 9.500h22M30 26v20M20.500 36h19" />
                <path d="M10 57.500h10M40 57.500h10" strokeWidth="4" />
              </svg>
              <Txt $size={34} $tone="outline">诊股</Txt>
            </NavItem>
            <NavItem $w={250}>
              <svg width="60" height="62" viewBox="0 0 60 62" fill="none" stroke="#ddd" strokeWidth="2.800">
                <rect x="7.500" y="9.500" width="45" height="46" />
                <path d="M30 20v26M17.500 32.500h25" />
              </svg>
              <Txt $size={34} $tone="outline">加自选</Txt>
            </NavItem>
            <NavItem $w={167}>
              <svg width="60" height="62" viewBox="0 0 60 62" fill="none" stroke="#ddd" strokeWidth="2.500">
                <circle cx="30" cy="32" r="24" />
                <path d="M19 25h22M19 39.500h22" />
              </svg>
              <Txt $size={34} $tone="outline">功能</Txt>
              <Badge $size={20} $top={26} $right={28} $c="#e93030" />
            </NavItem>
          </NavRow>
          <SystemRow>
            <svg width="46" height="46" viewBox="0 0 46 46" stroke="#7a7a7a" strokeWidth="3.500"><path d="M2 4.500h41M2 23h41M2 41.500h41" /></svg>
            <Spacer $w={212} />
            <svg width="46" height="46" viewBox="0 0 46 46" fill="none" stroke="#7a7a7a" strokeWidth="3.500"><rect x="4" y="4" width="38" height="38" rx="8.500" /></svg>
            <Spacer $w={211} />
            <svg width="46" height="46" viewBox="0 0 46 46" fill="none" stroke="#7a7a7a" strokeWidth="3"><path d="M5.500 21L36 4.500Q41 2.500 41.500 7V39Q41 43.500 36 41.500L5.500 25Q2 23 5.500 21z" /></svg>
            <Spacer $w={172} />
            <svg width="40" height="52" viewBox="0 0 40 52" fill="#8a8a8a">
              <circle cx="20" cy="8" r="5.800" />
              <path d="M2.500 14.500Q20 20 37 14.500Q40 18 37 20.500L27.500 23V49Q27.500 51 25.500 51Q22.500 51 22.500 49V40H17.500V49Q17.500 51 15.500 51Q12.500 51 12.500 49V23L3 20.500Q0 18 2.500 14.500z" />
            </svg>
          </SystemRow>
        </Bottom>
      </Page>
    </>
  );
}
